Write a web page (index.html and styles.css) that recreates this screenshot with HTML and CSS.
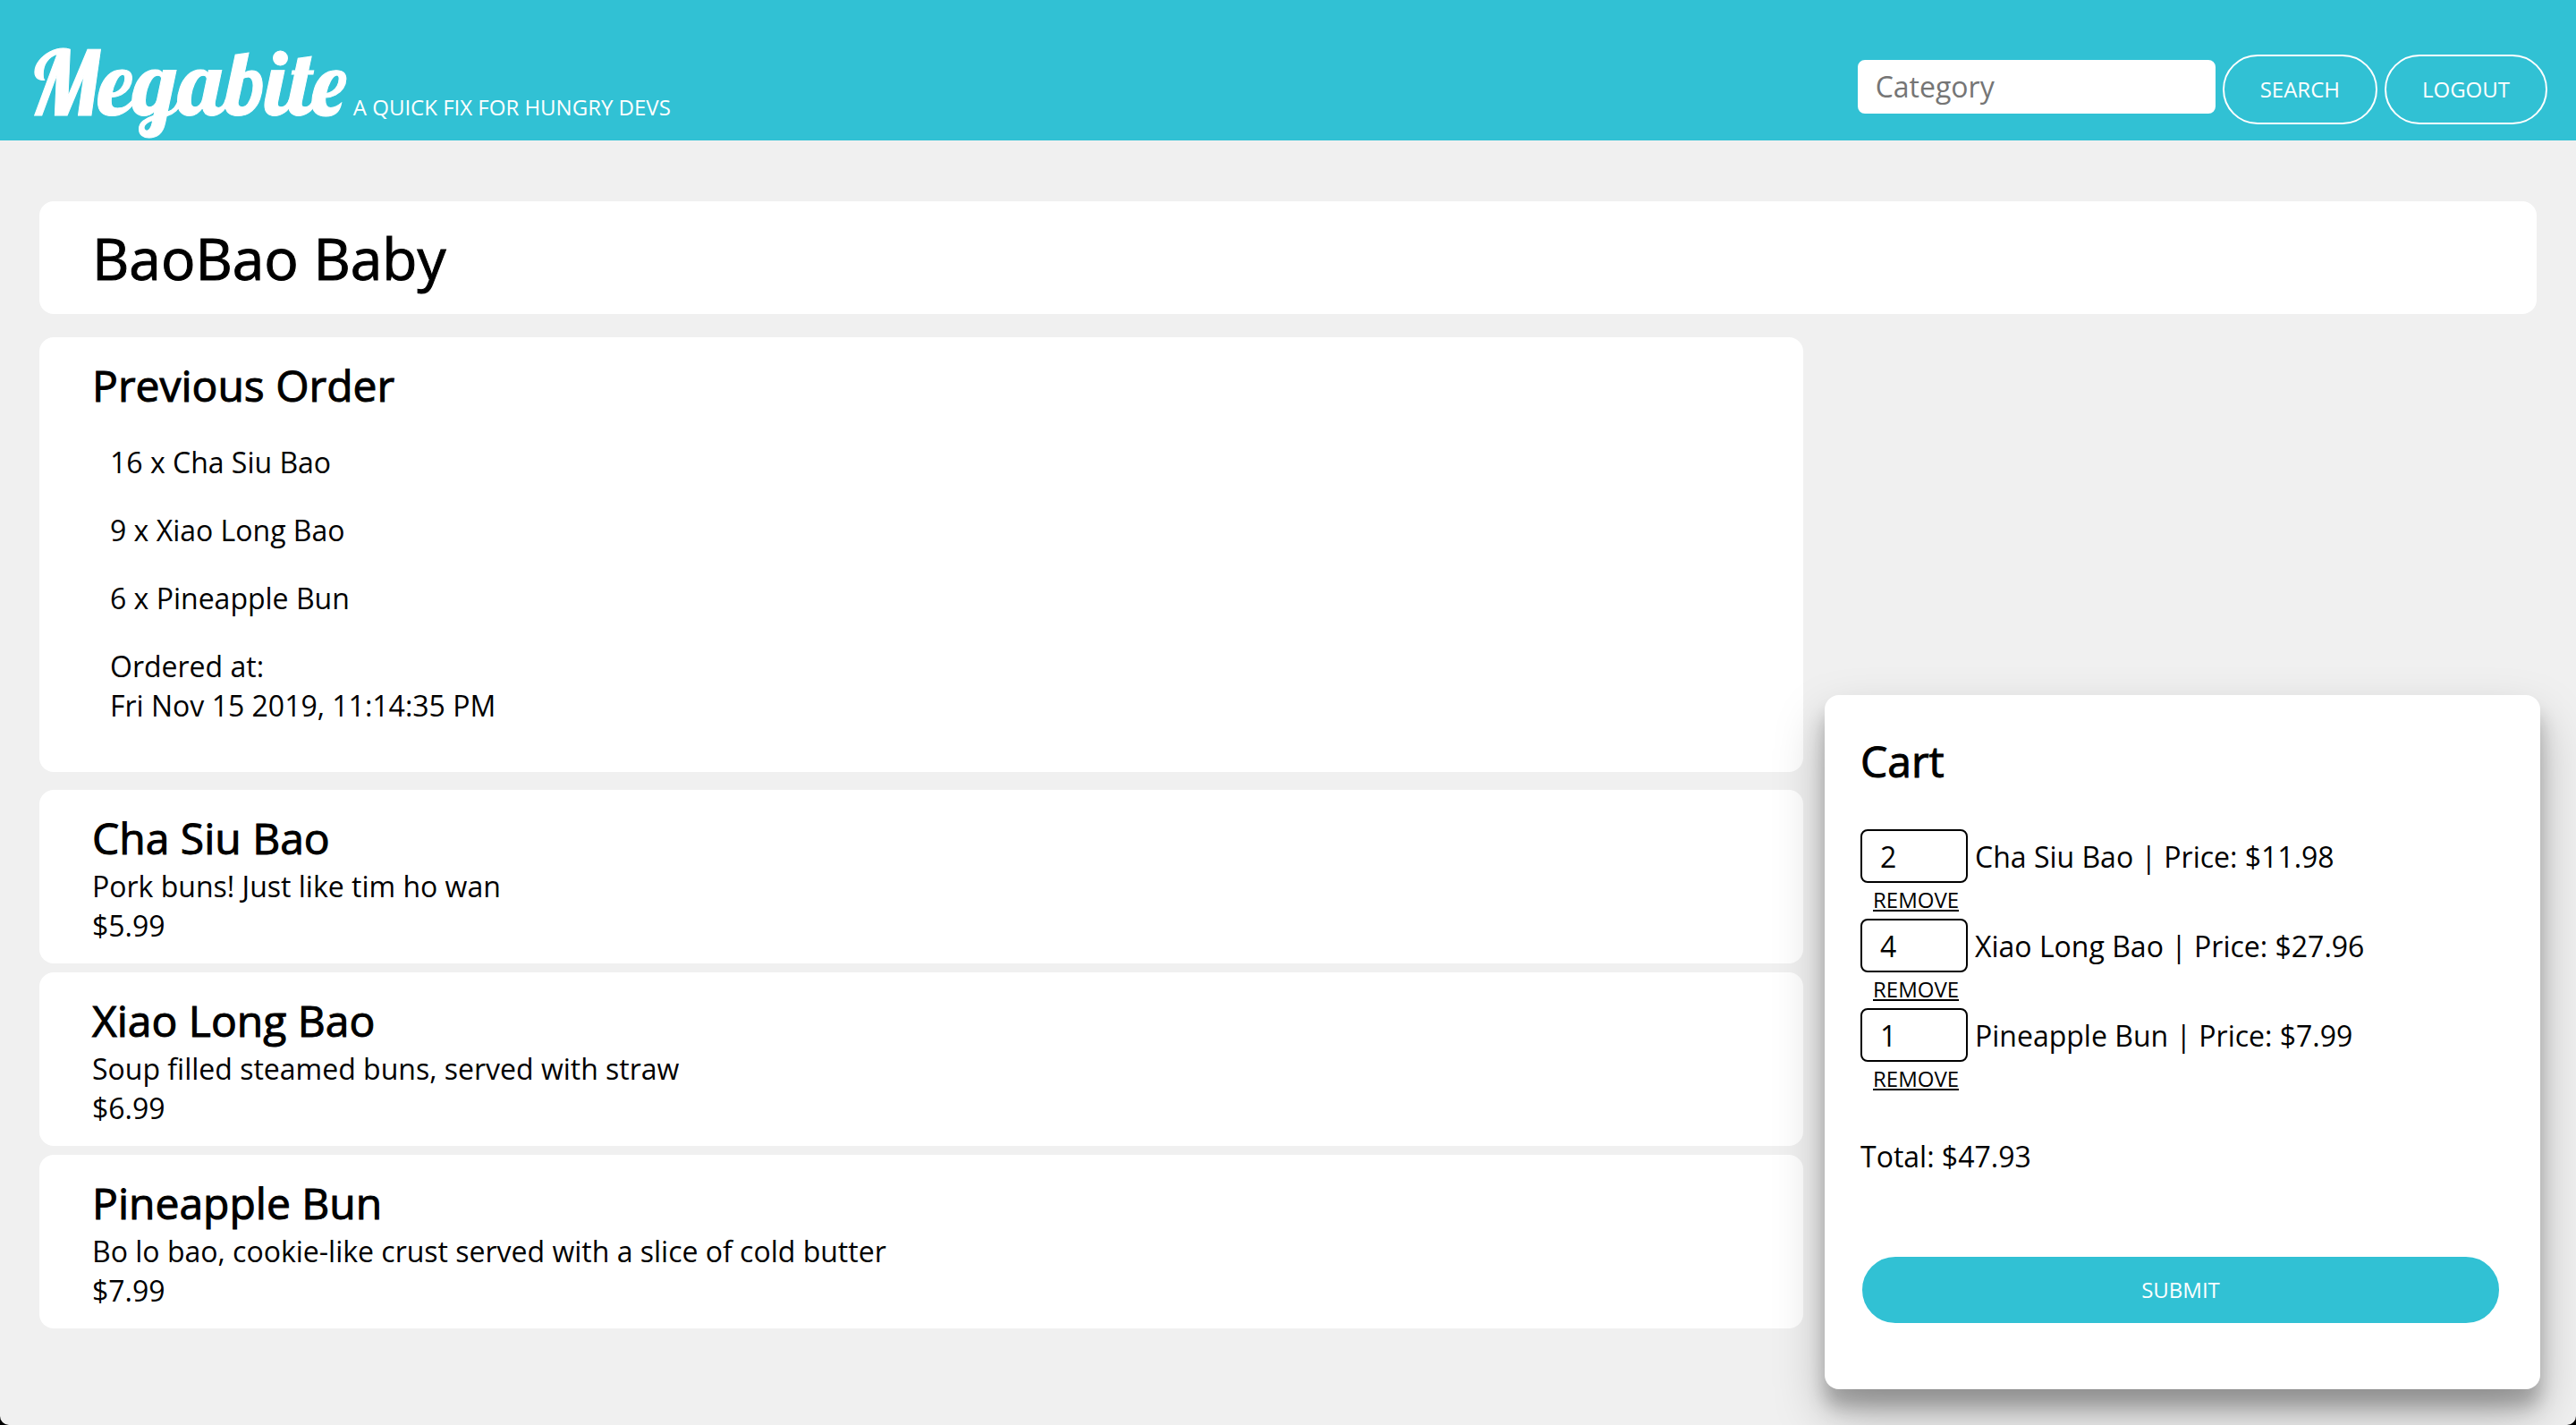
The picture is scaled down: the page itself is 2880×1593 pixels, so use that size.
FILE: index.html
```html
<!DOCTYPE html>
<html lang="en">
<head>
  <meta charset="utf-8">
  <meta name="viewport" content="width=device-width, initial-scale=1">
  <title>Megabite</title>
  <link rel="stylesheet" href="styles.css">
</head>
<body>
  <header class="site-header">
    <div class="brand">
      <a class="logo" href="#">Megabite</a>
      <span class="tagline">A QUICK FIX FOR HUNGRY DEVS</span>
    </div>
    <form class="search">
      <input class="field search-field" type="text" placeholder="Category" aria-label="Category">
      <button class="button" type="submit">SEARCH</button>
      <button class="button" type="button">LOGOUT</button>
    </form>
  </header>

  <main>
    <div class="card restaurant">
      <h1>BaoBao Baby</h1>
    </div>

    <div class="content">
      <div class="menu">
        <section class="card previous">
          <h2>Previous Order</h2>
          <ul class="order">
            <li>16 x Cha Siu Bao</li>
            <li>9 x Xiao Long Bao</li>
            <li>6 x Pineapple Bun</li>
            <li>Ordered at:<br>Fri Nov 15 2019, 11:14:35 PM</li>
          </ul>
        </section>

        <article class="card">
          <h2>Cha Siu Bao</h2>
          <p>Pork buns! Just like tim ho wan</p>
          <p>$5.99</p>
        </article>
        <article class="card">
          <h2>Xiao Long Bao</h2>
          <p>Soup filled steamed buns, served with straw</p>
          <p>$6.99</p>
        </article>
        <article class="card">
          <h2>Pineapple Bun</h2>
          <p>Bo lo bao, cookie-like crust served with a slice of cold butter</p>
          <p>$7.99</p>
        </article>
      </div>

      <aside class="cart">
        <h2>Cart</h2>
        <form>
          <ul class="cart-items">
            <li>
              <div class="cart-line">
                <input class="field quantity" id="qty-1" type="number" value="2">
                <label for="qty-1">Cha Siu Bao | Price: $11.98</label>
              </div>
              <button class="remove" type="button">REMOVE</button>
            </li>
            <li>
              <div class="cart-line">
                <input class="field quantity" id="qty-2" type="number" value="4">
                <label for="qty-2">Xiao Long Bao | Price: $27.96</label>
              </div>
              <button class="remove" type="button">REMOVE</button>
            </li>
            <li>
              <div class="cart-line">
                <input class="field quantity" id="qty-3" type="number" value="1">
                <label for="qty-3">Pineapple Bun | Price: $7.99</label>
              </div>
              <button class="remove" type="button">REMOVE</button>
            </li>
          </ul>
          <p class="total">Total: $47.93</p>
          <button class="button submit" type="submit">SUBMIT</button>
        </form>
      </aside>
    </div>
  </main>
</body>
</html>
```
FILE: styles.css
```css
:root {
  --brand: #31c1d4;
  --page: #f0f0f0;
}

* {
  box-sizing: border-box;
}

html {
  background: #000;
}

body {
  display: flex;
  flex-direction: column;
  min-height: 100vh;
  margin: 0;
  border-radius: 0 0 10px 10px;
  background: var(--page);
  color: #000;
  font: 32px/44px "Open Sans", sans-serif;
}

h1,
h2,
p,
ul {
  margin: 0;
  padding: 0;
}

ul {
  list-style: none;
}

/* Regular weight thickened slightly, lighter than the bold face */
h1,
h2 {
  margin-bottom: -2px;
  font-weight: 400;
  -webkit-text-stroke: 1px currentColor;
}

h1 {
  font-size: 64px;
  line-height: 88px;
}

h2 {
  font-size: 48px;
  line-height: 68px;
}

/* Header */
.site-header {
  display: flex;
  justify-content: space-between;
  align-items: flex-end;
  min-height: 157px;
  padding: 0 32px 18px;
  background: var(--brand);
  color: #fff;
}

.brand,
.search {
  display: flex;
  align-items: baseline;
  gap: 8px;
}

.logo {
  color: inherit;
  font: 400 100px/76px Lobster, "Liberation Serif", serif;
  text-decoration: none;
  -webkit-text-stroke: 1px currentColor;
}

.tagline {
  font-size: 24px;
  line-height: 38px;
}

/* Controls */
.field {
  height: 60px;
  padding: 6px 20px;
  border: 2px solid #fff;
  border-radius: 8px;
  background: #fff;
  color: #000;
  font: inherit;
}

.field::placeholder {
  color: #757575;
}

.search-field {
  width: 400px;
  padding: 6px 18px;
}

.button {
  height: 78px;
  padding: 0 40px;
  border: 2px solid #fff;
  border-radius: 40px;
  background: var(--brand);
  color: #fff;
  font: inherit;
  font-size: 24px;
}

/* Page */
main {
  display: flex;
  flex: 1;
  flex-direction: column;
  padding-top: 68px;
}

.card {
  padding: 20px 59px;
  border-radius: 16px;
  background: #fff;
}

.restaurant {
  margin: 0 44px 26px;
}

.content {
  display: grid;
  flex: 1;
  grid-template-columns: minmax(0, 1972fr) minmax(0, 800fr);
  gap: 24px;
  padding: 0 40px 40px 44px;
}

.menu {
  display: flex;
  flex-direction: column;
  gap: 10px;
}

.previous {
  margin-bottom: 10px;
}

.order {
  display: grid;
  gap: 32px;
  padding: 32px 20px;
}

/* Cart */
.cart {
  position: sticky;
  bottom: 40px;
  align-self: end;
  padding: 40px 44px 72px 40px;
  border-radius: 16px;
  background: #fff;
  box-shadow: 0 28px 56px rgba(0, 0, 0, 0.25), 0 20px 20px rgba(0, 0, 0, 0.22);
}

.cart-items {
  padding: 44px 0;
}

.cart-line {
  display: flex;
  align-items: baseline;
  gap: 8px;
}

.quantity {
  width: 120px;
  border-color: #000;
  appearance: textfield;
}

.remove {
  display: block;
  height: 40px;
  padding: 0 14px 2px;
  border: 0;
  background: none;
  color: #000;
  font: inherit;
  font-size: 24px;
  line-height: 38px;
  text-decoration: underline;
}

.submit {
  display: block;
  width: 100%;
  margin-top: 88px;
}
```
